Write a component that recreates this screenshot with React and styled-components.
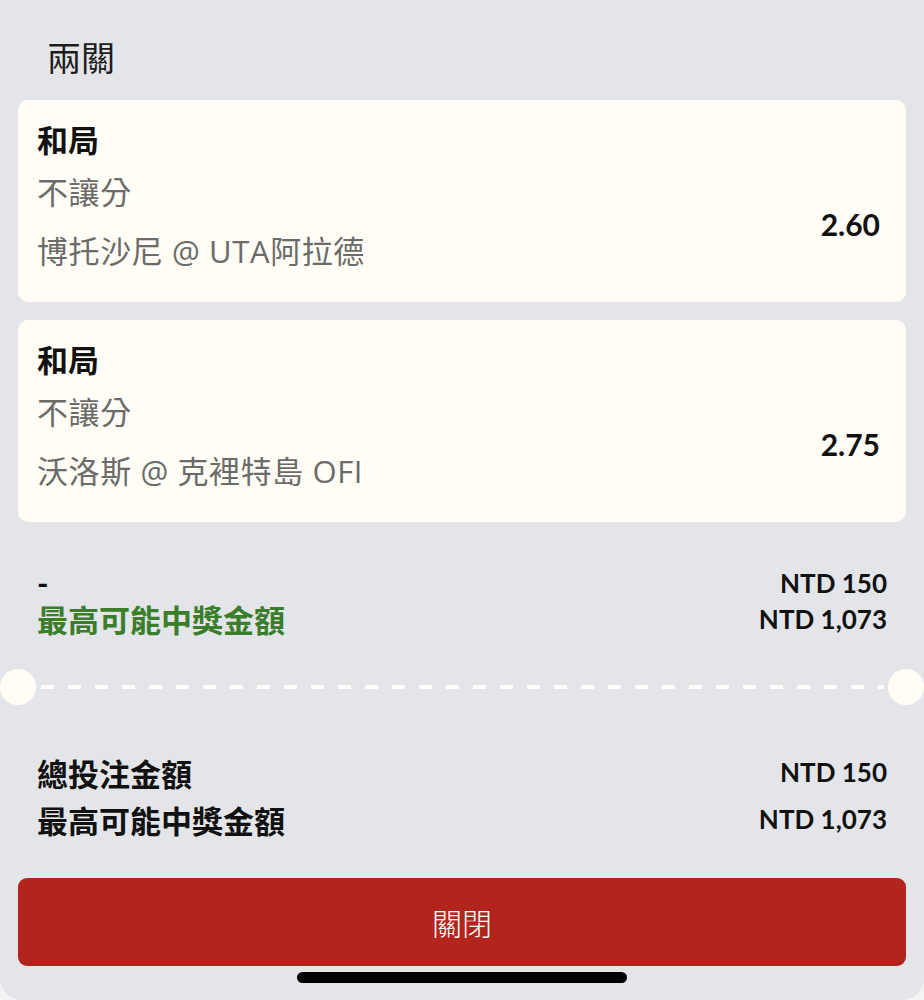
import React from 'react';
import styled, { createGlobalStyle } from 'styled-components';

const GlobalStyle = createGlobalStyle`
    html, body {
        margin: 0;
        padding: 0;
        background: #f4f4f5;
    }
    body {
        font-family: "Lato", "Noto Sans CJK TC", sans-serif;
        -webkit-font-smoothing: antialiased;
    }
`;

const Sheet = styled.div`
    box-sizing: border-box;
    width: 924px;
    height: 1000px;
    padding: 0 18px;
    background: #e4e5e8;
    border-radius: 0 0 22px 22px;
    overflow: hidden;
    display: flex;
    flex-direction: column;
`;

const Title = styled.h2`
    margin: 36px 0 23px 29px;
    font-family: "Noto Sans CJK TC", sans-serif;
    font-size: 34px;
    font-weight: 400;
    line-height: 41px;
    color: #1c1c1c;
`;

const Card = styled.div`
    box-sizing: border-box;
    height: 202px;
    margin-bottom: ${(p) => (p.$last ? 0 : 18)}px;
    padding: 18px 26px 0 19px;
    background: #fffdf5;
    border-radius: 10px;
    display: flex;
    justify-content: space-between;
    align-items: flex-start;
`;

const CardText = styled.div`
    display: flex;
    flex-direction: column;
`;

const Outcome = styled.div`
    font-family: "Noto Sans CJK TC", sans-serif;
    font-size: 31px;
    font-weight: 700;
    line-height: 42px;
    color: #111;
`;

const SubLine = styled.div`
    margin-top: ${(p) => p.$gap}px;
    font-family: "Open Sans", "Noto Sans CJK TC", sans-serif;
    font-size: 31px;
    font-weight: 400;
    line-height: 42px;
    letter-spacing: 0.6px;
    color: #6b6b69;
`;

const Odds = styled.div`
    margin-top: 88px;
    font-family: "Lato", sans-serif;
    font-size: 30px;
    font-weight: 700;
    line-height: 36px;
    color: #111;
`;

const Summary = styled.div`
    display: flex;
    flex-direction: column;
    gap: ${(p) => p.$gap}px;
    margin-top: ${(p) => p.$top}px;
`;

const SummaryRow = styled.div`
    height: ${(p) => p.$h}px;
    padding: 0 19px 0 19px;
    display: flex;
    justify-content: space-between;
    align-items: center;
`;

const SummaryLabel = styled.span`
    font-family: "Lato", "Noto Sans CJK TC", sans-serif;
    font-size: 31px;
    font-weight: 700;
    color: ${(p) => (p.$green ? '#3a7d2b' : '#111')};
`;

const Amount = styled.span`
    font-family: "Lato", sans-serif;
    font-size: 26px;
    font-weight: 700;
    color: #111;
`;

const Divider = styled.div`
    margin: 33px -18px 0;
    height: 36px;
    display: flex;
    align-items: center;
`;

const Notch = styled.div`
    flex: 0 0 36px;
    height: 36px;
    border-radius: 50%;
    background: #fffdf5;
`;

const Dashes = styled.div`
    flex: 1;
    height: 4px;
    margin: 0 4px 0 5px;
    background: repeating-linear-gradient(
        to right,
        #fdfdfb 0,
        #fdfdfb 13px,
        transparent 13px,
        transparent 27px
    );
`;

const CloseButton = styled.button`
    margin-top: 40px;
    height: 88px;
    width: 100%;
    border: none;
    border-radius: 9px;
    background: #b3251c;
    color: #fff;
    font-family: "Noto Sans CJK TC", sans-serif;
    font-size: 30px;
    font-weight: 300;
    cursor: pointer;
`;

const HomeBar = styled.div`
    align-self: center;
    margin-top: 6px;
    width: 330px;
    height: 11px;
    border-radius: 6px;
    background: #000;
`;

const legs = [
    { outcome: '和局', market: '不讓分', match: '博托沙尼 @ UTA阿拉德', odds: '2.60' },
    { outcome: '和局', market: '不讓分', match: '沃洛斯 @ 克裡特島 OFI', odds: '2.75' },
];

const App = () => {
    return (
        <Sheet>
            <GlobalStyle />
            <Title>兩關</Title>
            {legs.map((leg, i) => (
                <Card key={i} $last={i === legs.length - 1}>
                    <CardText>
                        <Outcome>{leg.outcome}</Outcome>
                        <SubLine $gap={11}>{leg.market}</SubLine>
                        <SubLine $gap={17}>{leg.match}</SubLine>
                    </CardText>
                    <Odds>{leg.odds}</Odds>
                </Card>
            ))}

            <Summary $top={43} $gap={0}>
                <SummaryRow $h={36}>
                    <SummaryLabel>-</SummaryLabel>
                    <Amount>NTD 150</Amount>
                </SummaryRow>
                <SummaryRow $h={35}>
                    <SummaryLabel $green>最高可能中獎金額</SummaryLabel>
                    <Amount>NTD 1,073</Amount>
                </SummaryRow>
            </Summary>

            <Divider>
                <Notch />
                <Dashes />
                <Notch />
            </Divider>

            <Summary $top={48} $gap={9}>
                <SummaryRow $h={38}>
                    <SummaryLabel>總投注金額</SummaryLabel>
                    <Amount>NTD 150</Amount>
                </SummaryRow>
                <SummaryRow $h={38}>
                    <SummaryLabel>最高可能中獎金額</SummaryLabel>
                    <Amount>NTD 1,073</Amount>
                </SummaryRow>
            </Summary>

            <CloseButton>關閉</CloseButton>
            <HomeBar />
        </Sheet>
    );
};

export default App;
